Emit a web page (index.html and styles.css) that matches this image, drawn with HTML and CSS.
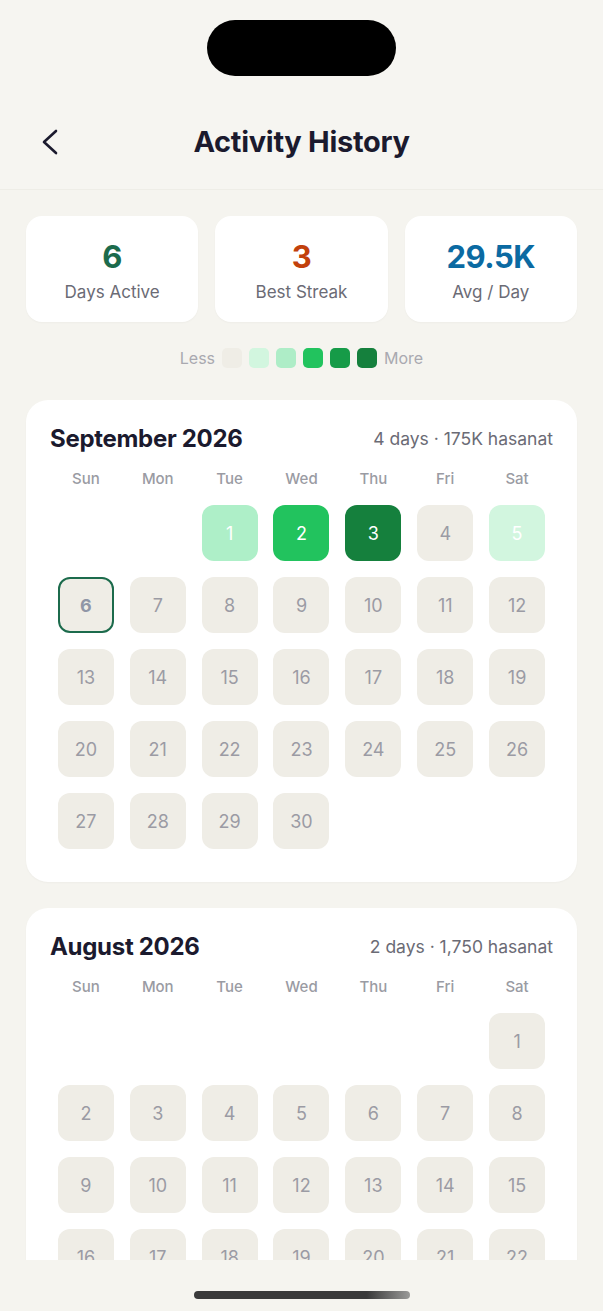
FILE: index.html
```html
<!DOCTYPE html>
<html lang="en">
<head>
<meta charset="utf-8">
<title>Activity History</title>
<link rel="stylesheet" href="styles.css">
</head>
<body>
<div class="screen">
  <div class="top">
    <div class="island"></div>
    <header class="header">
      <button class="back" aria-label="Back">
        <svg width="28" height="28" viewBox="0 0 28 28" fill="none"><polyline points="19,3 7,14 19,25" stroke="#1b1a2e" stroke-width="2.6" stroke-linecap="round" stroke-linejoin="round"/></svg>
      </button>
      <h1 class="title">Activity History</h1>
    </header>
  </div>

  <main class="scroll">
    <section class="stats">
      <div class="stat"><div class="stat-value green">6</div><div class="stat-label">Days Active</div></div>
      <div class="stat"><div class="stat-value orange">3</div><div class="stat-label">Best Streak</div></div>
      <div class="stat"><div class="stat-value blue">29.5K</div><div class="stat-label">Avg / Day</div></div>
    </section>

    <div class="legend">
      <span class="legend-text">Less</span>
      <span class="sq l0"></span><span class="sq l1"></span><span class="sq l2"></span><span class="sq l3"></span><span class="sq l4"></span><span class="sq l5"></span>
      <span class="legend-text">More</span>
    </div>

    <section class="month">
      <div class="month-head">
        <h2 class="month-title">September 2026</h2>
        <span class="month-sum">4 days · 175K hasanat</span>
      </div>
      <div class="grid">
        <div class="wd">Sun</div><div class="wd">Mon</div><div class="wd">Tue</div><div class="wd">Wed</div><div class="wd">Thu</div><div class="wd">Fri</div><div class="wd">Sat</div>
        <div class="blank"></div><div class="blank"></div>
        <div class="day l2">1</div><div class="day l3">2</div><div class="day l5">3</div><div class="day">4</div><div class="day l1">5</div>
        <div class="day today">6</div><div class="day">7</div><div class="day">8</div><div class="day">9</div><div class="day">10</div><div class="day">11</div><div class="day">12</div>
        <div class="day">13</div><div class="day">14</div><div class="day">15</div><div class="day">16</div><div class="day">17</div><div class="day">18</div><div class="day">19</div>
        <div class="day">20</div><div class="day">21</div><div class="day">22</div><div class="day">23</div><div class="day">24</div><div class="day">25</div><div class="day">26</div>
        <div class="day">27</div><div class="day">28</div><div class="day">29</div><div class="day">30</div>
      </div>
    </section>

    <section class="month">
      <div class="month-head">
        <h2 class="month-title">August 2026</h2>
        <span class="month-sum">2 days · 1,750 hasanat</span>
      </div>
      <div class="grid">
        <div class="wd">Sun</div><div class="wd">Mon</div><div class="wd">Tue</div><div class="wd">Wed</div><div class="wd">Thu</div><div class="wd">Fri</div><div class="wd">Sat</div>
        <div class="blank"></div><div class="blank"></div><div class="blank"></div><div class="blank"></div><div class="blank"></div><div class="blank"></div>
        <div class="day">1</div>
        <div class="day">2</div><div class="day">3</div><div class="day">4</div><div class="day">5</div><div class="day">6</div><div class="day">7</div><div class="day">8</div>
        <div class="day">9</div><div class="day">10</div><div class="day">11</div><div class="day">12</div><div class="day">13</div><div class="day">14</div><div class="day">15</div>
        <div class="day">16</div><div class="day">17</div><div class="day">18</div><div class="day">19</div><div class="day">20</div><div class="day">21</div><div class="day">22</div>
        <div class="day">23</div><div class="day">24</div><div class="day">25</div><div class="day">26</div><div class="day">27</div><div class="day">28</div><div class="day">29</div>
      </div>
    </section>
  </main>

  <footer class="bottom">
    <div class="home-indicator"></div>
  </footer>
</div>
</body>
</html>
```

FILE: styles.css
```css
* { box-sizing: border-box; }
html, body { margin: 0; padding: 0; }
body {
  background: #f5f4ef;
  font-family: Inter, "Noto Sans", "Liberation Sans", sans-serif;
  color: #1b1a2e;
}
.screen {
  width: 603px;
  height: 1311px;
  display: flex;
  flex-direction: column;
  overflow: hidden;
}
.top {
  background: #f6f5f1;
  border-bottom: 1px solid #eeede7;
  height: 190px;
  flex: none;
  display: flex;
  flex-direction: column;
  align-items: center;
  padding-top: 20px;
}
.island {
  width: 189px;
  height: 56px;
  border-radius: 28px;
  background: #000;
}
.header {
  width: 100%;
  position: relative;
  display: flex;
  align-items: center;
  justify-content: center;
  margin-top: 46px;
  height: 40px;
}
.back {
  position: absolute;
  left: 37px;
  top: 6px;
  background: none;
  border: 0;
  padding: 0;
  width: 28px;
  height: 28px;
  display: flex;
}
.title {
  margin: 0;
  font-size: 29px;
  font-weight: 700;
  letter-spacing: -0.3px;
  line-height: 40px;
  color: #1b1a2e;
}
.scroll {
  flex: 1;
  overflow: hidden;
  padding: 26px 26px 0;
}
.stats {
  display: grid;
  grid-template-columns: repeat(3, 1fr);
  gap: 17px;
}
.stat {
  background: #fff;
  border-radius: 16px;
  height: 106px;
  padding-top: 22px;
  text-align: center;
  box-shadow: 0 1px 2px rgba(0,0,0,0.03);
}
.stat-value {
  font-size: 31px;
  font-weight: 700;
  line-height: 38px;
  letter-spacing: -0.5px;
}
.green { color: #1c6b4c; }
.orange { color: #c2410c; }
.blue { color: #0b6aa2; }
.stat-label {
  margin-top: 6px;
  font-size: 17px;
  line-height: 20px;
  color: #6b6b75;
}
.legend {
  margin-top: 25px;
  display: flex;
  justify-content: center;
  align-items: center;
  gap: 7px;
  height: 21px;
}
.legend-text {
  font-size: 16px;
  color: #a9a9b0;
}
.sq {
  width: 20px;
  height: 20px;
  border-radius: 5px;
}
.l0 { background: #efede6; }
.l1 { background: #d2f6df; }
.l2 { background: #aeedc7; }
.l3 { background: #22c35e; }
.l4 { background: #169b48; }
.l5 { background: #15803d; }

.month {
  background: #fff;
  border-radius: 22px;
  margin-top: 32px;
  padding: 24px 24px 33px;
  box-shadow: 0 1px 2px rgba(0,0,0,0.03);
}
.month + .month { margin-top: 26px; }
.month-head {
  display: flex;
  justify-content: space-between;
  align-items: center;
  height: 28px;
}
.month-title {
  margin: 0;
  font-size: 24px;
  font-weight: 700;
  letter-spacing: -0.3px;
  color: #1b1a2e;
}
.month-sum {
  font-size: 17.5px;
  color: #6b6b75;
}
.grid {
  margin-top: 18px;
  display: grid;
  grid-template-columns: repeat(7, 1fr);
  row-gap: 16px;
  justify-items: center;
}
.wd {
  font-size: 15px;
  font-weight: 500;
  color: #9a9ba3;
  line-height: 18px;
  margin-bottom: 1px;
}
.day, .blank {
  width: 56px;
  height: 56px;
}
.day {
  border-radius: 12px;
  background: #efede6;
  display: flex;
  align-items: center;
  justify-content: center;
  font-size: 18px;
  color: #9b9ba4;
}
.day.l1, .day.l2, .day.l3, .day.l5 { color: #fff; }
.day.l1 { background: #d2f6df; }
.day.l2 { background: #aeefc8; }
.day.l3 { background: #22c35e; }
.day.l5 { background: #15803d; }
.day.today {
  border: 2.5px solid #1c6b4c;
  font-weight: 700;
  color: #9096a6;
}
.bottom {
  flex: none;
  height: 51px;
  background: #f5f4ef;
  display: flex;
  justify-content: center;
  padding-top: 31px;
}
.home-indicator {
  width: 216px;
  height: 8px;
  border-radius: 4px;
  background: linear-gradient(90deg, #3a3a3a 0%, #3a3a3a 80%, #9a9a98 100%);
}
```
